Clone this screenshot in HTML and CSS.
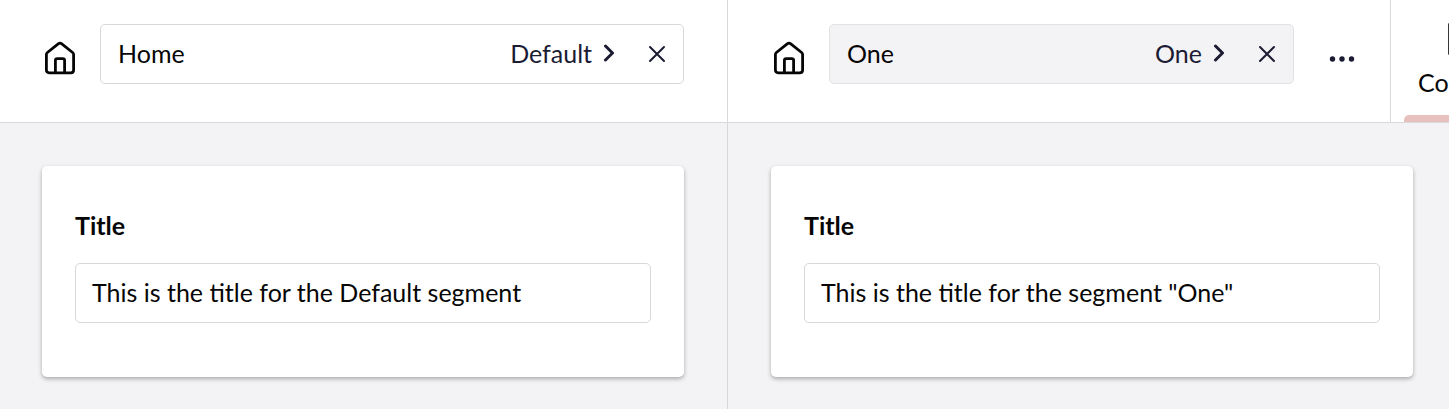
FILE: index.html
```
<!DOCTYPE html>
<html lang="en">
<head>
    <meta charset="UTF-8">
    <meta name="viewport" content="width=device-width, initial-scale=1.0">
    <title>Home</title>
    <link rel="stylesheet" href="styles.css">
</head>
<body>
    <main class="split-view">
        <section class="pane">
            <header class="pane-header">
                <button class="icon-button" type="button" aria-label="Change icon">
                    <svg width="32" height="34" viewBox="0 0 32 34" fill="none" stroke="currentColor" stroke-width="2.8" stroke-linejoin="round" stroke-linecap="round">
                        <path d="M2.4 13.6Q2.4 12.4 3.4 11.5L14.2 2.8Q16 1.4 17.8 2.8L28.6 11.5Q29.6 12.4 29.6 13.6V29Q29.6 31.8 26.8 31.8H5.2Q2.4 31.8 2.4 29Z"/>
                        <path d="M11.4 31.5V19.5Q11.4 17.6 13.3 17.6H18.7Q20.6 17.6 20.6 19.5V31.5"/>
                    </svg>
                </button>
                <div class="name-field">
                    <input class="name-input" type="text" value="Home" aria-label="Name">
                    <button class="variant-button" type="button">Default
                        <svg width="12" height="18" viewBox="0 0 12 18" fill="none" stroke="currentColor" stroke-width="3" stroke-linecap="round" stroke-linejoin="round">
                            <path d="M2.5 2L9.5 9L2.5 16"/>
                        </svg>
                    </button>
                    <button class="close-button" type="button" aria-label="Close">
                        <svg width="18" height="18" viewBox="0 0 18 18" fill="none" stroke="currentColor" stroke-width="2" stroke-linecap="round">
                            <path d="M2 2L16 16M16 2L2 16"/>
                        </svg>
                    </button>
                </div>
            </header>
            <div class="pane-body">
                <div class="card">
                    <label class="label" for="title-default">Title</label>
                    <input class="text-input" id="title-default" type="text" value="This is the title for the Default segment">
                </div>
            </div>
        </section>

        <section class="pane">
            <header class="pane-header with-tabs">
                <button class="icon-button" type="button" aria-label="Change icon">
                    <svg width="32" height="34" viewBox="0 0 32 34" fill="none" stroke="currentColor" stroke-width="2.8" stroke-linejoin="round" stroke-linecap="round">
                        <path d="M2.4 13.6Q2.4 12.4 3.4 11.5L14.2 2.8Q16 1.4 17.8 2.8L28.6 11.5Q29.6 12.4 29.6 13.6V29Q29.6 31.8 26.8 31.8H5.2Q2.4 31.8 2.4 29Z"/>
                        <path d="M11.4 31.5V19.5Q11.4 17.6 13.3 17.6H18.7Q20.6 17.6 20.6 19.5V31.5"/>
                    </svg>
                </button>
                <div class="name-field locked">
                    <input class="name-input" type="text" value="One" aria-label="Name" readonly>
                    <button class="variant-button" type="button">One
                        <svg width="12" height="18" viewBox="0 0 12 18" fill="none" stroke="currentColor" stroke-width="3" stroke-linecap="round" stroke-linejoin="round">
                            <path d="M2.5 2L9.5 9L2.5 16"/>
                        </svg>
                    </button>
                    <button class="close-button" type="button" aria-label="Close">
                        <svg width="18" height="18" viewBox="0 0 18 18" fill="none" stroke="currentColor" stroke-width="2" stroke-linecap="round">
                            <path d="M2 2L16 16M16 2L2 16"/>
                        </svg>
                    </button>
                </div>
                <button class="more-button" type="button" aria-label="More actions">
                    <svg width="26" height="6" viewBox="0 0 26 6" fill="currentColor">
                        <circle cx="3.5" cy="3" r="2.7"/>
                        <circle cx="13" cy="3" r="2.7"/>
                        <circle cx="22.5" cy="3" r="2.7"/>
                    </svg>
                </button>
                <nav class="tabs">
                    <button class="tab active" type="button">
                        <svg width="30" height="32" viewBox="0 0 30 32" fill="none" stroke="currentColor" stroke-width="3" stroke-linejoin="round">
                            <path d="M1.7 1.5H19L28.3 11V30.5H1.7Z"/>
                        </svg>
                        Content
                    </button>
                </nav>
            </header>
            <div class="pane-body">
                <div class="card">
                    <label class="label" for="title-one">Title</label>
                    <input class="text-input" id="title-one" type="text" value="This is the title for the segment &quot;One&quot;">
                </div>
            </div>
        </section>
    </main>
</body>
</html>
```
FILE: styles.css
```
* {
    box-sizing: border-box;
}

body {
    margin: 0;
    overflow: hidden;
    font-family: Lato, sans-serif;
    font-size: 25px;
    line-height: 32px;
    color: #060606;
    background-color: #f3f3f5;
}

button,
input {
    margin: 0;
    padding: 0;
    border: 0;
    background: none;
    font: inherit;
    color: inherit;
}

button {
    cursor: pointer;
}

svg {
    display: block;
    flex: none;
}

/* the second pane runs slightly past the window edge */
.split-view {
    display: grid;
    grid-template-columns: 1fr 1fr;
    width: calc(100% + 7px);
    min-height: 100vh;
}

.pane {
    display: flex;
    flex-direction: column;
    min-width: 0;
    border-right: 1px solid #d8d7d9;
}

.pane-header {
    display: flex;
    align-items: flex-start;
    height: 123px;
    padding: 24px 43px 0 44px;
    background-color: #fff;
    border-bottom: 1px solid #d8d7d9;
}

.pane-header.with-tabs {
    padding-left: 45px;
    padding-right: 0;
}

.icon-button {
    display: flex;
    align-items: center;
    height: 68px;
    margin-right: 24px;
}

.name-field {
    display: flex;
    align-items: stretch;
    flex: 1;
    min-width: 0;
    height: 60px;
    border: 1px solid #d8d7d9;
    border-radius: 5px;
    background-color: #fff;
}

.name-field.locked {
    background-color: #f3f3f5;
    border-color: #e2e2e4;
}

.name-input {
    flex: 1;
    min-width: 0;
    padding: 0 0 3px 17px;
}

.variant-button,
.close-button {
    display: flex;
    align-items: center;
    color: #1b1b33;
}

.variant-button {
    gap: 11px;
    padding-bottom: 2px;
}

.close-button {
    padding: 0 17px 0 33px;
}

.more-button {
    display: flex;
    align-items: center;
    justify-content: center;
    width: 96px;
    height: 70px;
    color: #1b1b33;
}

.tabs {
    align-self: stretch;
    width: 65px;
    margin-top: -24px;
    padding-left: 13px;
    border-left: 1px solid #d8d7d9;
    overflow: hidden;
}

.tab {
    display: flex;
    flex-direction: column;
    align-items: center;
    gap: 11px;
    height: 122px;
    padding: 23px 14px 0;
}

/* bar under the selected tab */
.tab.active::after {
    content: "";
    align-self: stretch;
    height: 7px;
    margin: auto -14px 0;
    border-radius: 5px 5px 0 0;
    background-color: #e8c1be;
}

.pane-body {
    flex: 1;
    padding: 43px 43px 32px 42px;
}

.pane + .pane .pane-body {
    padding-left: 43px;
    padding-right: 42px;
}

.card {
    padding: 43px 33px 54px;
    border-radius: 5px;
    background-color: #fff;
    box-shadow: 0 2px 4px rgba(0, 0, 0, 0.3);
}

.label {
    display: block;
    margin-bottom: 22px;
    font-weight: bold;
}

.text-input {
    display: block;
    width: 100%;
    height: 60px;
    padding: 0 16px 3px;
    border: 1px solid #d8d7d9;
    border-radius: 5px;
}
```
